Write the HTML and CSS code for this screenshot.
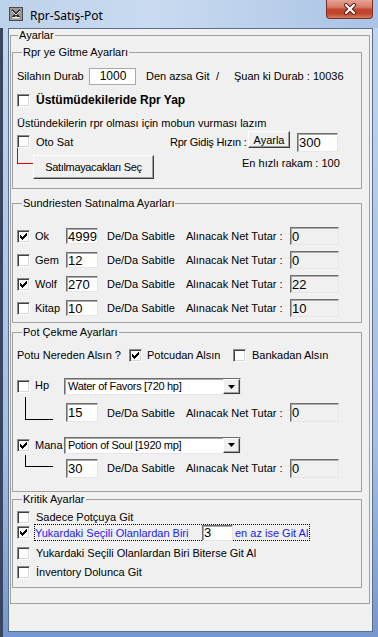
FILE: index.html
```html
<!DOCTYPE html>
<html lang="tr">
<head>
  <meta charset="UTF-8">
  <meta name="viewport" content="width=device-width, initial-scale=1.0">
  <title>Rpr-Satış-Pot</title>
  <link rel="stylesheet" href="styles.css">
</head>
<body>
  <div class="window">
    <!-- Baslik cubugu -->
    <div class="titlebar">
      <svg class="app-icon" width="14" height="14" viewBox="0 0 14 14">
        <rect x="0.5" y="0.5" width="13" height="13" fill="#9a9a9a" stroke="#4a4a4a"/>
        <path d="M3 3 L11 11 M11 3 L3 11" stroke="#2b2b2b" stroke-width="2"/>
        <path d="M3 4 L7 8 L11 4" stroke="#e8e8e8" stroke-width="1" fill="none"/>
        <rect x="3" y="10" width="8" height="1.5" fill="#e8e8e8"/>
      </svg>
      <span class="title">Rpr-Satış-Pot</span>
      <div class="close-btn">
        <svg width="14" height="12" viewBox="0 0 14 12">
          <path d="M3 2 L11 10 M11 2 L3 10" stroke="#5b1d14" stroke-width="4" stroke-linecap="round"/>
          <path d="M3 2 L11 10 M11 2 L3 10" stroke="#ffffff" stroke-width="2.2" stroke-linecap="round"/>
        </svg>
      </div>
    </div>

    <!-- Pencere icerigi -->
    <div class="client">
      <fieldset class="group outer">
        <legend>Ayarlar</legend>

        <!-- Rpr ayarlari -->
        <fieldset class="group g-rpr">
          <legend>Rpr ye Gitme Ayarları</legend>
          <div class="row r-durab">
            <span class="lbl-durab">Silahın Durab</span>
            <input class="edit flat" type="text" value="1000">
            <span class="lbl-azsa">Den azsa Git</span>
            <span class="lbl-slash">/</span>
            <span class="lbl-suan">Şuan ki Durab :</span>
            <span>10036</span>
          </div>
          <div class="row r-ustum">
            <span class="cb"></span>
            <span class="bold-label">Üstümüdekileride Rpr Yap</span>
          </div>
          <div class="row r-note">Üstündekilerin rpr olması için mobun vurması lazım</div>
          <div class="row r-oto">
            <span class="cb"></span>
            <span class="lbl-oto">Oto Sat</span>
            <span class="lbl-hiz">Rpr Gidiş Hızın :</span>
            <button class="btn btn-ayarla">Ayarla</button>
            <input class="edit edit-hiz" type="text" value="300">
          </div>
          <div class="row r-sec">
            <span class="branch red"></span>
            <button class="btn btn-sec">Satılmayacakları Seç</button>
            <span class="lbl-rakam">En hızlı rakam : 100</span>
          </div>
        </fieldset>

        <!-- Sundries -->
        <fieldset class="group g-sund">
          <legend>Sundriesten Satınalma Ayarları</legend>
          <div class="buy-list">
            <div class="row buy-row">
              <span class="cb checked"><svg width="7" height="7" viewBox="0 0 7 7"><path d="M0 2h1v3H0zM1 3h1v3H1zM2 4h1v3H2zM3 3h1v3H3zM4 2h1v3H4zM5 1h1v3H5zM6 0h1v3H6z"/></svg></span>
              <span class="item-name">Ok</span>
              <input class="edit edit-qty" type="text" value="4999">
              <span class="col-sabitle">De/Da Sabitle</span>
              <span class="col-tutar">Alınacak Net Tutar :</span>
              <input class="edit readonly" type="text" value="0" readonly>
            </div>
            <div class="row buy-row">
              <span class="cb"></span>
              <span class="item-name">Gem</span>
              <input class="edit edit-qty" type="text" value="12">
              <span class="col-sabitle">De/Da Sabitle</span>
              <span class="col-tutar">Alınacak Net Tutar :</span>
              <input class="edit readonly" type="text" value="0" readonly>
            </div>
            <div class="row buy-row">
              <span class="cb checked"><svg width="7" height="7" viewBox="0 0 7 7"><path d="M0 2h1v3H0zM1 3h1v3H1zM2 4h1v3H2zM3 3h1v3H3zM4 2h1v3H4zM5 1h1v3H5zM6 0h1v3H6z"/></svg></span>
              <span class="item-name">Wolf</span>
              <input class="edit edit-qty" type="text" value="270">
              <span class="col-sabitle">De/Da Sabitle</span>
              <span class="col-tutar">Alınacak Net Tutar :</span>
              <input class="edit readonly" type="text" value="22" readonly>
            </div>
            <div class="row buy-row">
              <span class="cb"></span>
              <span class="item-name">Kitap</span>
              <input class="edit edit-qty" type="text" value="10">
              <span class="col-sabitle">De/Da Sabitle</span>
              <span class="col-tutar">Alınacak Net Tutar :</span>
              <input class="edit readonly" type="text" value="10" readonly>
            </div>
          </div>
        </fieldset>

        <!-- Pot cekme -->
        <fieldset class="group g-pot">
          <legend>Pot Çekme Ayarları</legend>
          <div class="row r-nereden">
            <span class="lbl-nereden">Potu Nereden Alsın ?</span>
            <span class="cb checked"><svg width="7" height="7" viewBox="0 0 7 7"><path d="M0 2h1v3H0zM1 3h1v3H1zM2 4h1v3H2zM3 3h1v3H3zM4 2h1v3H4zM5 1h1v3H5zM6 0h1v3H6z"/></svg></span>
            <span class="lbl-potcu">Potcudan Alsın</span>
            <span class="cb"></span>
            <span class="lbl-banka">Bankadan Alsın</span>
          </div>
          <div class="row pot-row r-hp">
            <span class="cb"></span>
            <span class="pot-name">Hp</span>
            <div class="combo">
              <span class="combo-text">Water of Favors [720 hp]</span>
              <span class="combo-btn"><svg width="7" height="4" viewBox="0 0 7 4"><path d="M0 0h7L3.5 4z"/></svg></span>
            </div>
          </div>
          <div class="row pot-sub r-hp-sub">
            <span class="branch"></span>
            <input class="edit edit-pot" type="text" value="15">
            <span class="col-sabitle">De/Da Sabitle</span>
            <span class="col-tutar">Alınacak Net Tutar :</span>
            <input class="edit readonly tall" type="text" value="0" readonly>
          </div>
          <div class="row pot-row r-mana">
            <span class="cb checked"><svg width="7" height="7" viewBox="0 0 7 7"><path d="M0 2h1v3H0zM1 3h1v3H1zM2 4h1v3H2zM3 3h1v3H3zM4 2h1v3H4zM5 1h1v3H5zM6 0h1v3H6z"/></svg></span>
            <span class="pot-name">Mana</span>
            <div class="combo">
              <span class="combo-text">Potion of Soul [1920 mp]</span>
              <span class="combo-btn"><svg width="7" height="4" viewBox="0 0 7 4"><path d="M0 0h7L3.5 4z"/></svg></span>
            </div>
          </div>
          <div class="row pot-sub r-mana-sub">
            <span class="branch short"></span>
            <input class="edit edit-pot" type="text" value="30">
            <span class="col-sabitle">De/Da Sabitle</span>
            <span class="col-tutar">Alınacak Net Tutar :</span>
            <input class="edit readonly tall" type="text" value="0" readonly>
          </div>
        </fieldset>

        <!-- Kritik -->
        <fieldset class="group g-krit">
          <legend>Kritik Ayarlar</legend>
          <div class="row k-row k1">
            <span class="cb"></span>
            <span class="k-label">Sadece Potçuya Git</span>
          </div>
          <div class="row k2">
            <span class="cb checked"><svg width="7" height="7" viewBox="0 0 7 7"><path d="M0 2h1v3H0zM1 3h1v3H1zM2 4h1v3H2zM3 3h1v3H3zM4 2h1v3H4zM5 1h1v3H5zM6 0h1v3H6z"/></svg></span>
            <div class="focus">
              <span class="lbl-biri">Yukardaki Seçili Olanlardan Biri</span>
              <input class="edit edit-az" type="text" value="3">
              <span class="lbl-az">en az ise Git Al</span>
            </div>
          </div>
          <div class="row k-row k3">
            <span class="cb"></span>
            <span class="k-label">Yukardaki Seçili Olanlardan Biri Biterse Git Al</span>
          </div>
          <div class="row k-row k4">
            <span class="cb"></span>
            <span class="k-label">İnventory Dolunca Git</span>
          </div>
        </fieldset>
      </fieldset>
    </div>
  </div>
</body>
</html>
```

FILE: styles.css
```css
* {
  box-sizing: border-box;
}

body {
  margin: 0;
  width: 378px;
  height: 637px;
  overflow: hidden;
  font: 11px "Liberation Sans", Arial, sans-serif;
  color: #000;
}

/* Pencere cercevesi */
.window {
  height: 637px;
  display: flex;
  flex-direction: column;
  background: linear-gradient(180deg, #c3d7ee 0%, #b4cbe9 30%, #a3bfe3 70%, #7398d0 100%);
  box-shadow: inset 3px 0 0 #3a4660;
}

.titlebar {
  height: 28px;
  flex: none;
  display: flex;
  align-items: center;
  background: linear-gradient(90deg, #bcd1ea 0%, #cadbf0 40%, #b7cde9 75%, #a9c3e6 100%);
}

.app-icon {
  margin-left: 9px;
  margin-top: -1px;
}

.title {
  margin-left: 7px;
  margin-top: 2px;
  font: 12px "Noto Sans", "Open Sans", sans-serif;
  color: #000;
}

.close-btn {
  align-self: flex-start;
  margin-left: auto;
  margin-right: 5px;
  width: 47px;
  height: 19px;
  border: 1px solid #7d2f25;
  border-top: none;
  border-radius: 0 0 4px 4px;
  background: linear-gradient(180deg, #e6a394 0%, #d77a68 40%, #c24631 52%, #c0432c 75%, #d77d5f 100%);
  display: flex;
  align-items: center;
  justify-content: center;
}

.client {
  flex: 1;
  margin: 0 5px 5px 8px;
  background: #f0f0f0;
  border: 1px solid #5c6f8c;
}

/* Grup kutulari */
.group {
  margin: 0;
  padding: 0;
  min-width: 0;
  border: 1px solid #a0a0a0;
}

.group legend {
  padding: 0 1px;
  margin-left: 5px;
  line-height: 12px;
}

.outer {
  margin: 0 2px 0 1px;
  padding: 0 7px 0 1px;
  height: 575px;
}

.outer > legend {
  margin-left: 6px;
}

.g-rpr,
.g-sund,
.g-pot,
.g-krit {
  padding: 0 0 0 4px;
}

.g-rpr { margin-top: 5px; height: 143px; }
.g-sund { margin-top: 8px; height: 126px; }
.g-pot { margin-top: 3px; height: 166px; }
.g-krit { margin-top: 1px; height: 95px; }

.row {
  display: flex;
  align-items: center;
  white-space: nowrap;
}

/* Kontroller */
.cb {
  flex: none;
  width: 13px;
  height: 13px;
  background: #fff;
  border: 1px solid;
  border-color: #8a8a8a #fff #fff #8a8a8a;
  box-shadow: inset 1px 1px 0 #404040, inset -1px -1px 0 #d8d8d8;
  display: flex;
  align-items: center;
  justify-content: center;
}

.cb svg {
  fill: #000;
  shape-rendering: crispEdges;
}

.edit {
  flex: none;
  margin: 0;
  padding: 0 0 0 1px;
  font: 13px "Liberation Sans", Arial, sans-serif;
  color: #000;
  background: #fff;
  border: 1px solid;
  border-color: #6e6e6e #e6e6e6 #e6e6e6 #6e6e6e;
  box-shadow: inset 1px 1px 0 #a8a8a8;
  outline: none;
}

.edit.flat {
  width: 47px;
  height: 17px;
  font-size: 12px;
  text-align: center;
  border: 1px solid #a8a8a8;
  box-shadow: none;
}

.edit.readonly {
  width: 49px;
  height: 18px;
  background: #f0f0f0;
}

.edit.readonly.tall {
  height: 19px;
}

.btn {
  flex: none;
  margin: 0;
  padding: 0;
  font: 11px "Liberation Sans", Arial, sans-serif;
  color: #000;
  background: #f0f0f0;
  border: 1px solid;
  border-color: #fff #3c3c3c #3c3c3c #fff;
  box-shadow: inset -1px -1px 0 #a0a0a0;
}

.combo {
  flex: none;
  display: flex;
  width: 177px;
  height: 17px;
  background: #fff;
  border: 1px solid;
  border-color: #6e6e6e #e6e6e6 #e6e6e6 #6e6e6e;
  box-shadow: inset 1px 1px 0 #a8a8a8;
}

.combo-text {
  flex: 1;
  padding-left: 3px;
  line-height: 15px;
  letter-spacing: -0.3px;
}

.combo-btn {
  width: 17px;
  background: #f0f0f0;
  border: 1px solid;
  border-color: #fff #3c3c3c #3c3c3c #fff;
  box-shadow: inset -1px -1px 0 #a0a0a0;
  display: flex;
  align-items: center;
  justify-content: center;
}

.branch {
  flex: none;
  align-self: flex-start;
  border-left: 1px solid #000;
  border-bottom: 1px solid #000;
}

.branch.red {
  width: 16px;
  height: 16px;
  margin-top: -7px;
  border-color: #e00000;
}

/* Rpr ayarlari satirlari */
.r-durab { margin-top: 9px; height: 18px; }
.lbl-durab { width: 72px; }
.lbl-azsa { margin-left: 10px; width: 70px; }
.lbl-slash { width: 18px; }
.lbl-suan { width: 79px; }

.r-ustum { margin-top: 8px; height: 14px; }
.bold-label {
  margin-left: 6px;
  font-size: 12px;
  font-weight: bold;
}

.r-note { margin-top: 9px; height: 14px; }

.r-oto { margin-top: 1px; height: 21px; }
.lbl-oto { margin-left: 6px; width: 134px; }
.lbl-hiz { width: 78px; letter-spacing: -0.25px; }
.btn-ayarla {
  align-self: flex-start;
  width: 42px;
  height: 17px;
}
.edit-hiz {
  align-self: flex-start;
  margin-top: 2px;
  margin-left: 7px;
  width: 41px;
  height: 19px;
}

.r-sec { margin-top: 3px; height: 24px; align-items: flex-start; }
.btn-sec { width: 121px; height: 24px; letter-spacing: -0.35px; }
.lbl-rakam { margin-left: 88px; margin-top: 1px; line-height: 14px; }

/* Sundries satirlari */
.buy-list { margin-top: 15px; }
.buy-row { height: 24px; }
.item-name { margin-left: 5px; width: 31px; }
.edit-qty { width: 32px; height: 16px; }
.col-sabitle { margin-left: 9px; width: 79px; }
.col-tutar { width: 104px; }

/* Pot satirlari */
.r-nereden { margin-top: 9px; height: 16px; }
.lbl-nereden { width: 112px; }
.lbl-potcu { margin-left: 5px; width: 86px; }
.lbl-banka { margin-left: 6px; }

.pot-name { margin-left: 5px; width: 29px; }
.r-hp { margin-top: 14px; height: 19px; }
.r-hp .pot-name { margin-top: -3px; }
.r-mana { margin-top: 14px; height: 16px; }

.pot-sub .branch {
  margin-left: 8px;
  margin-right: 13px;
  width: 28px;
}
.r-hp-sub { margin-top: 6px; height: 21px; }
.r-hp-sub .branch { margin-top: -5px; height: 23px; }
.r-mana-sub { margin-top: 5px; height: 20px; }
.r-mana-sub .branch { margin-top: -3px; height: 12px; }
.edit-pot { width: 32px; height: 19px; }

/* Kritik satirlari */
.k-label { margin-left: 6px; }
.k1 { margin-top: 5px; height: 14px; }
.k2 { height: 17px; }
.k3 { margin-top: 5px; height: 14px; }
.k4 { margin-top: 5px; height: 14px; }

.focus {
  display: flex;
  align-items: center;
  margin-left: 4px;
  height: 17px;
  padding-right: 1px;
  border: 1px dotted #000;
  color: #1a1aff;
}
.lbl-biri { width: 167px; }
.edit-az { width: 31px; height: 16px; }
.lbl-az { margin-left: 2px; }
```
